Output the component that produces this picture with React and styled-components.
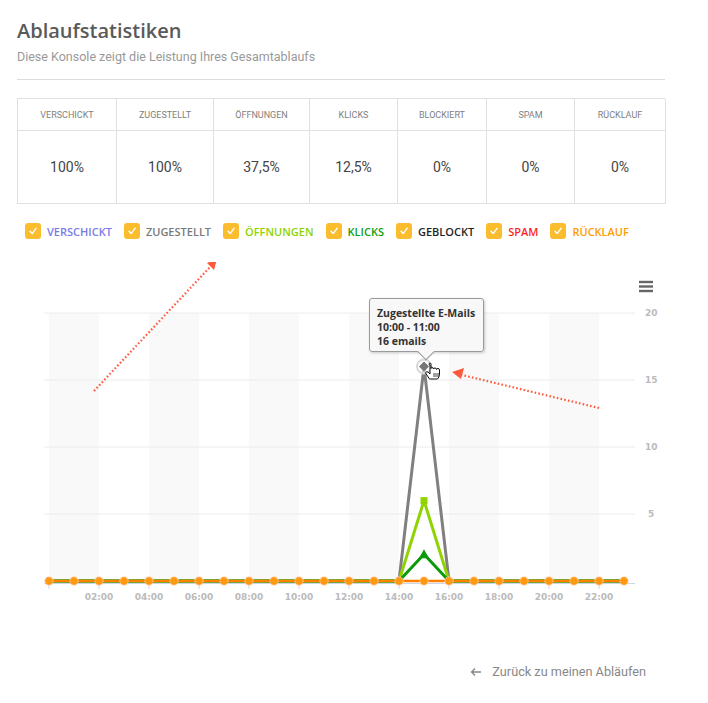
import React from 'react'
import styled, { createGlobalStyle } from 'styled-components'

const GlobalStyle = createGlobalStyle`
  body {
    margin: 0;
    background: #fff;
    font-family: Roboto, "Liberation Sans", sans-serif;
  }
`

const stats = [
  { label: 'Verschickt', value: '100%', w: 99 },
  { label: 'Zugestellt', value: '100%', w: 97 },
  { label: 'Öffnungen', value: '37,5%', w: 96 },
  { label: 'Klicks', value: '12,5%', w: 88 },
  { label: 'Blockiert', value: '0%', w: 89 },
  { label: 'Spam', value: '0%', w: 88 },
  { label: 'Rücklauf', value: '0%', w: 91 },
]

const legend = [
  { label: 'Verschickt', color: '#7b7be6' },
  { label: 'Zugestellt', color: '#7a7a7a' },
  { label: 'Öffnungen', color: '#8fd400' },
  { label: 'Klicks', color: '#11a011' },
  { label: 'Geblockt', color: '#1e1e1e' },
  { label: 'Spam', color: '#ff1f1f' },
  { label: 'Rücklauf', color: '#ff9c00' },
]

// chart geometry (page coordinates)
const X0 = 49
const STEP = 25
const Y0 = 581
const UNIT = 13.4
const px = (i) => X0 + i * STEP
const py = (v) => Y0 - v * UNIT

const peak = (val) =>
  Array.from({ length: 24 }, (_, i) => (i === 15 ? val : 0))

const toPoints = (data) => data.map((v, i) => `${px(i)},${py(v)}`).join(' ')

function Chart() {
  const bands = [0, 1, 2, 3, 4, 5]
  const grid = [20, 15, 10, 5]
  const ticks = Array.from({ length: 12 }, (_, i) => i * 2)
  return (
    <ChartSvg viewBox="0 262 708 370" width="708" height="370">
      {bands.map((k) => (
        <rect key={k} x={X0 + k * 100} y={313} width={50} height={270} fill="#f9f9f9" />
      ))}
      {grid.map((g) => (
        <g key={g}>
          <line x1={44} x2={635} y1={py(g)} y2={py(g)} stroke="#ececec" strokeWidth="1" />
          <text x={g === 5 ? 648 : 645} y={py(g) + 3} className="axis">{g}</text>
        </g>
      ))}
      <line x1={44} x2={635} y1={583.5} y2={583.5} stroke="#ccd6eb" strokeWidth="1" />
      {ticks.map((h) => (
        <g key={h}>
          <line x1={px(h)} x2={px(h)} y1={583} y2={589} stroke="#ccd6eb" strokeWidth="1" />
          {h > 0 && (
            <text x={px(h)} y={600} textAnchor="middle" className="axis">
              {String(h).padStart(2, '0')}:00
            </text>
          )}
        </g>
      ))}

      <polyline points={toPoints(peak(16))} fill="none" stroke="#808080" strokeWidth="3" strokeLinejoin="round" />
      <polyline points={toPoints(peak(6))} fill="none" stroke="#8fd400" strokeWidth="3" strokeLinejoin="round" />
      <polyline points={toPoints(peak(2))} fill="none" stroke="#0b9a0b" strokeWidth="3" strokeLinejoin="round" />
      <line x1={px(0)} x2={px(23)} y1={Y0} y2={Y0} stroke="#ff7f00" strokeWidth="2.5" />

      {Array.from({ length: 24 }, (_, i) => (
        <circle key={i} cx={px(i)} cy={Y0} r={4.2} fill="#ff9a10" stroke="#ffd2c4" strokeWidth="1.2" strokeDasharray="1 1" />
      ))}

      <rect x={px(15) - 3.5} y={py(6) - 3.5} width={7} height={7} fill="#8fd400" />
      <polygon
        points={`${px(15)},${py(2) - 5} ${px(15) + 5},${py(2) + 4} ${px(15) - 5},${py(2) + 4}`}
        fill="#0b9a0b"
      />
      <circle cx={px(15)} cy={py(16)} r={7} fill="#fff" fillOpacity="0.6" stroke="#d8d8d8" strokeWidth="2" />
      <polygon
        points={`${px(15)},${py(16) - 5} ${px(15) + 5},${py(16)} ${px(15)},${py(16) + 5} ${px(15) - 5},${py(16)}`}
        fill="#777"
      />

      {/* hand cursor */}
      <path
        d="M430 365 v9 l-2 -2 q-2 -1 -2.5 1 l4 6 h8 q2 -2 2 -5 v-4 q0 -1.5 -1.5 -1.5 q-1.5 0 -1.5 1 q0 -1.5 -1.5 -1.5 q-1.5 0 -1.5 1 q0 -1.5 -1.5 -1.5 q-1 0 -1 1 v-4 q0 -1.5 -1 -1.5 q-1 0 -1 1.5 z"
        fill="#fff"
        stroke="#111"
        strokeWidth="1"
        strokeLinejoin="round"
      />
      <line x1={434} x2={434} y1={373} y2={377} stroke="#111" strokeWidth="0.8" />
      <line x1={436} x2={436} y1={373} y2={377} stroke="#111" strokeWidth="0.8" />
      <line x1={438} x2={438} y1={373} y2={377} stroke="#111" strokeWidth="0.8" />

      {/* menu */}
      <g stroke="#666" strokeWidth="2.4">
        <line x1={639} x2={653} y1={282} y2={282} />
        <line x1={639} x2={653} y1={286.5} y2={286.5} />
        <line x1={639} x2={653} y1={291} y2={291} />
      </g>

      {/* annotation arrows */}
      <g stroke="#ff5a3c" strokeWidth="2.2" strokeDasharray="1.6 2.2" fill="none">
        <line x1={94} y1={391} x2={210} y2={267} />
        <line x1={599} y1={408} x2={462} y2={375} />
      </g>
      <polygon points="217,259 214,270 207,263" fill="#ff5a3c" />
      <polygon points="452,372 464,368 461,379" fill="#ff5a3c" />
    </ChartSvg>
  )
}

export default function App() {
  return (
    <Page>
      <GlobalStyle />
      <Content>
        <Title>Ablaufstatistiken</Title>
        <Subtitle>Diese Konsole zeigt die Leistung Ihres Gesamtablaufs</Subtitle>
        <Divider />
        <StatsTable>
          {stats.map((s) => (
            <StatHead key={s.label} style={{ width: s.w }}>{s.label}</StatHead>
          ))}
          {stats.map((s) => (
            <StatValue key={s.label}>{s.value}</StatValue>
          ))}
        </StatsTable>
        <Legend>
          {legend.map((l) => (
            <LegendItem key={l.label} $color={l.color}>
              <Check>
                <svg width="10" height="10" viewBox="0 0 10 10">
                  <path d="M2 5.3 L4.2 7.6 L8.2 2.2" fill="none" stroke="#fff" strokeWidth="1.4" strokeLinecap="round" strokeLinejoin="round" />
                </svg>
              </Check>
              {l.label}
            </LegendItem>
          ))}
        </Legend>
      </Content>
      <ChartArea>
        <Chart />
        <Tooltip>
          <div>Zugestellte E-Mails</div>
          <div>10:00 - 11:00</div>
          <div>16 emails</div>
        </Tooltip>
      </ChartArea>
      <Footer>
        <BackLink>
          <svg width="12" height="10" viewBox="0 0 12 10">
            <path d="M11 5 H1.5 M5 1.5 L1.5 5 L5 8.5" fill="none" stroke="#888" strokeWidth="1.3" />
          </svg>
          Zurück zu meinen Abläufen
        </BackLink>
      </Footer>
    </Page>
  )
}

const Page = styled.div`
  width: 708px;
  min-height: 703px;
`

const Content = styled.div`
  padding: 18px 0 0 17px;
  width: 648px;
`

const Title = styled.h1`
  margin: 0;
  font-family: "Open Sans", sans-serif;
  font-weight: 600;
  font-size: 20px;
  line-height: 26px;
  color: #5a5a5a;
`

const Subtitle = styled.div`
  margin-top: 5px;
  font-size: 12.5px;
  line-height: 16px;
  color: #999;
`

const Divider = styled.div`
  margin-top: 14px;
  height: 1px;
  background: #dcdcdc;
`

const StatsTable = styled.div`
  margin-top: 18px;
  display: grid;
  grid-template-columns: 99px 97px 96px 88px 89px 88px 91px;
  grid-template-rows: 32px 73px;
  border-top: 1px solid #e0e0e0;
  border-left: 1px solid #e0e0e0;
  box-sizing: border-box;
  width: 648px;
`

const Cell = styled.div`
  display: flex;
  align-items: center;
  justify-content: center;
  border-right: 1px solid #e0e0e0;
  border-bottom: 1px solid #e0e0e0;
  box-sizing: border-box;
`

const StatHead = styled(Cell)`
  font-size: 9px;
  text-transform: uppercase;
  color: #808080;
`

const StatValue = styled(Cell)`
  font-size: 14px;
  color: #444;
`

const Legend = styled.div`
  margin-top: 18px;
  height: 18px;
  display: flex;
  align-items: center;
  padding-left: 8px;
  gap: 12px;
`

const LegendItem = styled.div`
  display: flex;
  align-items: center;
  gap: 6px;
  font-family: "Open Sans", sans-serif;
  font-weight: 600;
  font-size: 11px;
  text-transform: uppercase;
  color: ${(p) => p.$color};
`

const Check = styled.span`
  width: 16px;
  height: 16px;
  border-radius: 3px;
  background: #fbbd2e;
  display: flex;
  align-items: center;
  justify-content: center;
`

const ChartArea = styled.div`
  position: relative;
  margin-top: 22px;
  height: 370px;
`

const ChartSvg = styled.svg`
  display: block;
  .axis {
    font-family: "DejaVu Sans", sans-serif;
    font-size: 9px;
    font-weight: bold;
    fill: #bbb;
  }
`

const Tooltip = styled.div`
  position: absolute;
  left: 369px;
  top: 36px;
  width: 115px;
  height: 54px;
  box-sizing: border-box;
  padding: 7px 0 0 7px;
  background: rgba(248, 248, 248, 0.96);
  border: 1px solid #9a9a9a;
  border-radius: 3px;
  box-shadow: 1px 1px 3px rgba(0, 0, 0, 0.2);
  font-family: "Open Sans", sans-serif;
  font-weight: 700;
  font-size: 10.5px;
  line-height: 14px;
  color: #333;
  &::after {
    content: '';
    position: absolute;
    left: 50px;
    bottom: -7px;
    width: 11px;
    height: 11px;
    background: #f8f8f8;
    border-right: 1px solid #9a9a9a;
    border-bottom: 1px solid #9a9a9a;
    transform: rotate(45deg);
  }
`

const Footer = styled.div`
  display: flex;
  justify-content: flex-end;
  width: 646px;
  margin-top: 32px;
`

const BackLink = styled.a`
  display: flex;
  align-items: center;
  gap: 10px;
  font-size: 12.7px;
  color: #888;
  cursor: pointer;
`
